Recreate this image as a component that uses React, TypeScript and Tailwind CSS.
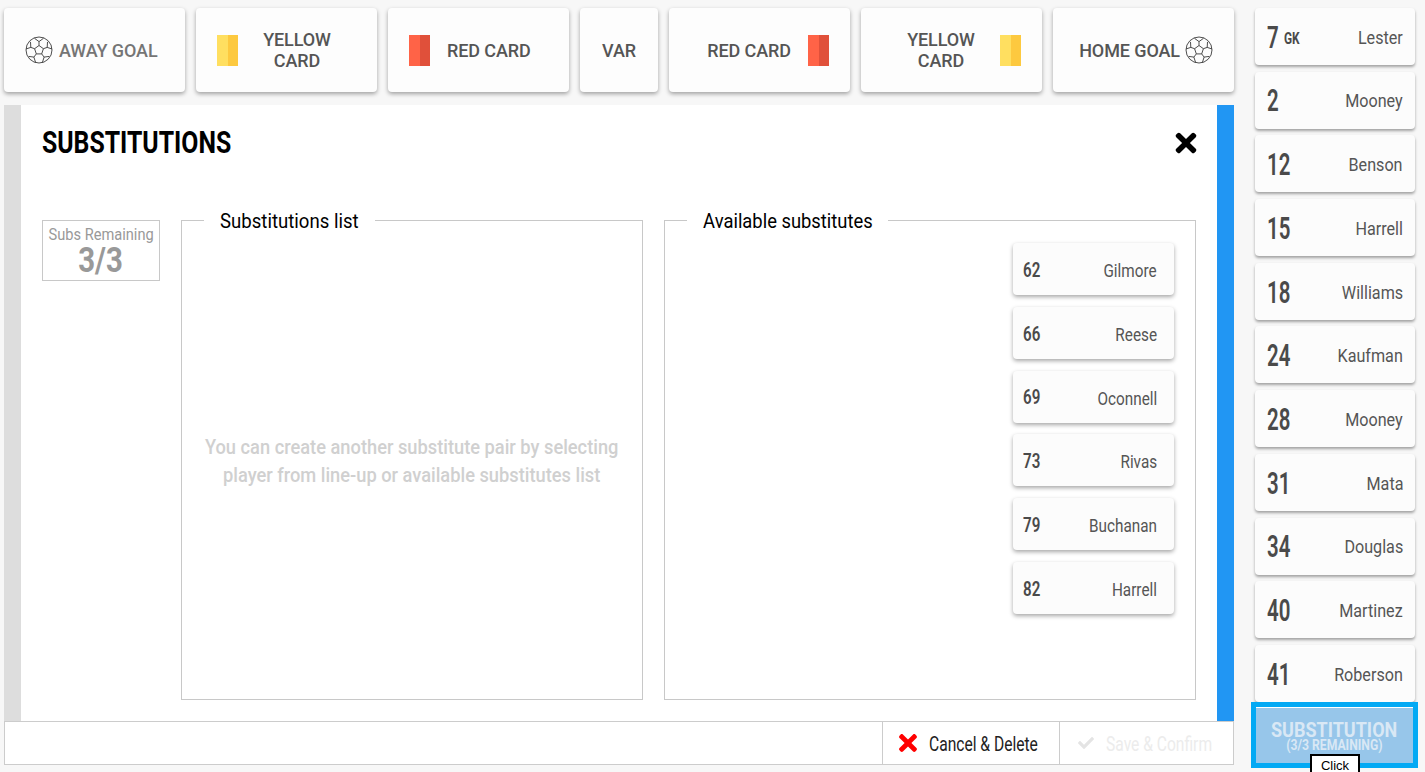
import { FaTimes, FaCheck } from "react-icons/fa";

function Ball() {
  return (
    <svg width="28" height="28" viewBox="0 0 28 28" fill="none" stroke="#222" strokeWidth="0.8" className="shrink-0">
      <circle cx="14" cy="14" r="13" />
      <path d="M14 9.5l4.4 3.2-1.7 5.2h-5.4l-1.7-5.2z" />
      <path d="M14 9.5V5.6M18.4 12.7l3.8-1.3M16.7 17.9l2.4 3.2M11.3 17.9l-2.4 3.2M9.6 12.7l-3.8-1.3" />
      <path d="M9.5 2.3L14 5.6l4.5-3.3M22.2 11.4l.3-5.5M22.2 11.4l4.6 1.5M19.1 21.1l5.2-.7M19.1 21.1l-1.7 5.4M8.9 21.1l-5.2-.7M8.9 21.1l1.7 5.4M5.8 11.4l-.3-5.5M5.8 11.4l-4.6 1.5" />
    </svg>
  );
}

function Card({ left, right }: { left: string; right: string }) {
  return (
    <div className="flex h-[31px] w-[21px] shrink-0">
      <div className={`h-full flex-1 ${left}`} />
      <div className={`h-full flex-1 ${right}`} />
    </div>
  );
}

const btn =
  "flex h-[84px] items-center rounded-[4px] bg-[#fdfdfd] shadow-[0_2px_4px_rgba(0,0,0,0.35)] text-[18px] font-medium leading-[21px] text-[#555] text-center tracking-[-0.1px]";

function Narrow({ children, x = 0.8, origin = "center", className = "" }: { children: React.ReactNode; x?: number; origin?: string; className?: string }) {
  return (
    <span className={`inline-block whitespace-nowrap ${className}`} style={{ transform: `scaleX(${x})`, transformOrigin: origin }}>
      {children}
    </span>
  );
}

function PlayerRow({ num, name, gk }: { num: string; name: string; gk?: boolean }) {
  return (
    <div className="flex h-[57px] w-[160px] items-center justify-between rounded-[4px] bg-[#fcfcfc] pl-3 pr-[12px] pt-[3px] shadow-[0_2px_3px_rgba(0,0,0,0.35)]">
      <div className="flex items-center">
        <Narrow x={0.66} origin="left" className="w-[16px] text-[31px] font-semibold text-[#4a4a4a]">{num}</Narrow>
        {gk && <Narrow x={0.7} origin="left" className="ml-[1px] mt-[1px] text-[17px] font-bold text-[#4a4a4a]">GK</Narrow>}
      </div>
      <Narrow x={0.85} origin="right" className="text-[19px] text-[#555]">{name}</Narrow>
    </div>
  );
}

function SubRow({ num, name }: { num: string; name: string }) {
  return (
    <div className="flex h-[52px] w-[161px] items-center justify-between rounded-[4px] bg-[#fcfcfc] pl-[10px] pr-[17px] pt-[3px] shadow-[0_2px_4px_rgba(0,0,0,0.35)]">
      <Narrow x={0.72} origin="left" className="text-[21px] font-semibold text-[#4a4a4a]">{num}</Narrow>
      <Narrow x={0.85} origin="right" className="text-[18px] text-[#555]">{name}</Narrow>
    </div>
  );
}

const lineup: [string, string][] = [
  ["2", "Mooney"],
  ["12", "Benson"],
  ["15", "Harrell"],
  ["18", "Williams"],
  ["24", "Kaufman"],
  ["28", "Mooney"],
  ["31", "Mata"],
  ["34", "Douglas"],
  ["40", "Martinez"],
  ["41", "Roberson"],
];

const subs: [string, string][] = [
  ["62", "Gilmore"],
  ["66", "Reese"],
  ["69", "Oconnell"],
  ["73", "Rivas"],
  ["79", "Buchanan"],
  ["82", "Harrell"],
];

export default function App() {
  return (
    <div className="flex h-[772px] w-[1425px] overflow-hidden bg-[#f7f7f7]" style={{ fontFamily: "Roboto, sans-serif" }}>
      <div className="ml-[4px] flex w-[1230px] flex-col pt-[8px]">
        <div className="flex justify-between">
          <div className={`${btn} w-[181px] gap-[6px] pl-[21px]`}>
            <Ball />
            <span className="text-[#757575]">AWAY GOAL</span>
          </div>
          <div className={`${btn} w-[181px] pl-[21px] pr-[21px]`}>
            <Card left="bg-[#ffdf60]" right="bg-[#fdc93f]" />
            <span className="flex-1">YELLOW<br />CARD</span>
          </div>
          <div className={`${btn} w-[181px] gap-[17px] pl-[21px]`}>
            <Card left="bg-[#ff6347]" right="bg-[#e0503a]" />
            <span>RED CARD</span>
          </div>
          <div className={`${btn} w-[78px] justify-center`}>VAR</div>
          <div className={`${btn} w-[181px] justify-end gap-[17px] pr-[21px]`}>
            <span>RED CARD</span>
            <Card left="bg-[#ff6347]" right="bg-[#e0503a]" />
          </div>
          <div className={`${btn} w-[181px] pl-[21px] pr-[21px]`}>
            <span className="flex-1">YELLOW<br />CARD</span>
            <Card left="bg-[#ffdf60]" right="bg-[#fdc93f]" />
          </div>
          <div className={`${btn} w-[181px] justify-end gap-[5px] pr-[21px]`}>
            <span>HOME GOAL</span>
            <Ball />
          </div>
        </div>

        <div className="mt-[13px] flex h-[616px] bg-white">
          <div className="w-[17px] bg-[#dddddd]" />
          <div className="flex min-w-0 flex-1 flex-col px-[21px]">
            <div className="flex h-[75px] items-center justify-between">
              <Narrow x={0.8} origin="left" className="pt-[2px] text-[31px] font-bold text-black">SUBSTITUTIONS</Narrow>
              <FaTimes className="mr-[-5px] shrink-0 text-[30px] text-black" />
            </div>
            <div className="mt-[40px] flex">
              <div className="flex h-[61px] w-[118px] shrink-0 flex-col items-center border border-[#c8c8c8] pt-[5px] leading-none">
                <Narrow x={0.86} className="text-[17px] text-[#999]">Subs Remaining</Narrow>
                <Narrow x={0.84} className="text-[35px] font-bold text-[#999]">3/3</Narrow>
              </div>
              <fieldset className="ml-[21px] h-[480px] w-[462px] min-w-0 shrink-0 border border-[#c8c8c8]">
                <legend className="ml-[22px] px-[15px] text-[21px] leading-[1px] text-black">
                  <Narrow x={0.885} className="mx-[-8px] translate-y-[1px]">Substitutions list</Narrow>
                </legend>
                <div className="flex h-full items-center justify-center pt-[2px] text-center text-[21px] font-medium leading-[28px] text-[#d0d0d0]">
                  <Narrow x={0.87}>You can create another substitute pair by selecting<br />player from line-up or available substitutes list</Narrow>
                </div>
              </fieldset>
              <fieldset className="ml-[21px] h-[480px] w-[532px] min-w-0 shrink-0 border border-[#c8c8c8]">
                <legend className="ml-[22px] px-[15px] text-[21px] leading-[1px] text-black">
                  <Narrow x={0.875} className="mx-[-11.5px] translate-y-[1px]">Available substitutes</Narrow>
                </legend>
                <div className="flex flex-col items-end gap-[11.8px] pr-[21px] pt-[22px]">
                  {subs.map(([n, s]) => (
                    <SubRow key={n} num={n} name={s} />
                  ))}
                </div>
              </fieldset>
            </div>
          </div>
          <div className="w-[17px] bg-[#2196f3]" />
        </div>

        <div className="flex h-[44px] justify-end border border-[#cccccc] bg-white">
          <div className="flex w-[177px] items-center border-l border-[#cccccc] pl-[12px]">
            <FaTimes className="shrink-0 text-[26px] text-[#ff0000]" />
            <Narrow x={0.78} origin="left" className="ml-[8px] w-[110px] pt-[1px] text-[20px] text-[#222]">Cancel &amp; Delete</Narrow>
          </div>
          <div className="flex w-[174px] items-center border-l border-[#cccccc] pl-[18px]">
            <FaCheck className="shrink-0 text-[16px] text-[#e4e4e4]" />
            <Narrow x={0.78} origin="left" className="ml-[12px] w-[110px] pt-[1px] text-[20px] text-[#ececec]">Save &amp; Confirm</Narrow>
          </div>
        </div>
      </div>

      <div className="relative ml-[21px] flex w-[160px] flex-col gap-[6.7px] pt-[8px]">
        <PlayerRow num="7" name="Lester" gk />
        {lineup.map(([n, s]) => (
          <PlayerRow key={n + s} num={n} name={s} />
        ))}
        <div className="absolute left-[-4px] top-[702px] flex h-[66px] w-[167px] flex-col items-center border-[5px] border-[#03a9f4] bg-[#97c6ea] pt-[14px] font-bold text-[#d9e8f5] shadow-[inset_0_1px_0_#fff]">
          <Narrow x={0.9} className="text-[20px] leading-[18px]">SUBSTITUTION</Narrow>
          <Narrow x={0.87} className="text-[14px] leading-[13px]">(3/3 REMAINING)</Narrow>
        </div>
        <div className="absolute left-[55px] top-[754px] flex h-[18px] w-[50px] items-center justify-center border-2 border-b-0 border-black bg-white pt-[3px] text-[13px] text-black" style={{ fontFamily: "'Liberation Sans', sans-serif" }}>
          Click
        </div>
      </div>
    </div>
  );
}
